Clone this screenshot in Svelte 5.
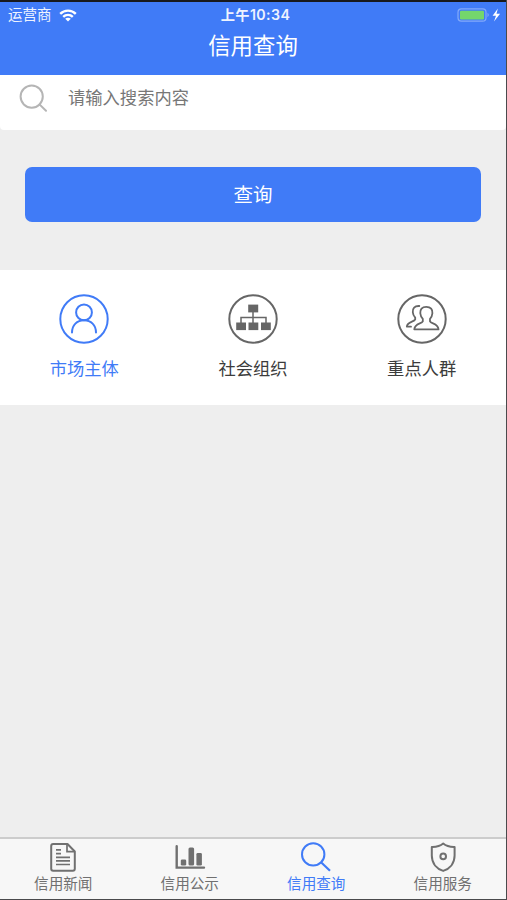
<script lang="ts">
	const categories = [
		{ id: 'market', label: '市场主体' },
		{ id: 'society', label: '社会组织' },
		{ id: 'people', label: '重点人群' }
	];

	const tabs = [
		{ id: 'news', label: '信用新闻' },
		{ id: 'public', label: '信用公示' },
		{ id: 'query', label: '信用查询' },
		{ id: 'service', label: '信用服务' }
	];

	let keyword = $state('');
	let category = $state('market');
	let activeTab = $state('query');
</script>

<div class="screen">
	<header>
		<div class="status-bar">
			<div class="carrier">
				<span>运营商</span>
				<svg width="18" height="13" viewBox="0 0 18 13" fill="none" stroke="#fff" stroke-width="2.4">
					<path d="M1.2 4.8C5.5.5 12.5.5 16.8 4.8" />
					<path d="M4.2 7.8C6.9 5.2 11.1 5.2 13.8 7.8" />
					<path d="M9 12.6 6.2 9.8C7.7 8.4 10.3 8.4 11.8 9.8Z" fill="#fff" stroke="none" />
				</svg>
			</div>
			<span class="time">上午10:34</span>
			<svg class="battery" width="44" height="14" viewBox="0 0 44 14">
				<rect x="1" y=".8" width="28" height="12.4" rx="3.4" fill="none" stroke="#83a9fa" stroke-width="1.2" />
				<rect x="3" y="2.8" width="24" height="8.6" rx="1.2" fill="#74d66c" />
				<path d="M30.5 4.8Q33 7 30.5 9.2Z" fill="#83a9fa" />
				<path d="M40.9.4 35.6 7.8H39L37 13.6 43.1 5.8H39.5Z" fill="#fff" />
			</svg>
		</div>
		<h1>信用查询</h1>
	</header>

	<label class="search">
		<svg width="30" height="30" viewBox="0 0 30 30" fill="none" stroke="#b5b5b5" stroke-width="2">
			<circle cx="13.7" cy="13.6" r="11.1" />
			<path d="M21.5 21.4 28 27.7" stroke-linecap="round" />
		</svg>
		<input type="text" placeholder="请输入搜索内容" bind:value={keyword} />
	</label>

	<button class="submit">查询</button>

	<section class="categories">
		{#each categories as item}
			<button class="category" class:active={category === item.id} onclick={() => (category = item.id)}>
				<svg width="50" height="50" viewBox="0 0 50 50" fill="none" stroke="currentColor" stroke-width="2">
					<circle cx="25" cy="25" r="23.7" />
					{#if item.id === 'market'}
						<circle cx="25" cy="18.4" r="7.9" />
						<path d="M13 38.6C13 31 18 26.3 25 26.3S37 31 37 38.6" stroke-linecap="round" />
					{:else if item.id === 'society'}
						<path d="M25 17V29M13 29V23.4H38V29" stroke-width="1.5" />
						<g fill="currentColor" stroke="none">
							<rect x="20.2" y="10.6" width="10" height="7.8" />
							<rect x="8.2" y="28.5" width="9.8" height="7.6" />
							<rect x="20.5" y="28.5" width="9.8" height="7.6" />
							<rect x="33" y="28.5" width="9.8" height="7.6" />
						</g>
					{:else}
						<g stroke-width="1.8" stroke-linecap="round" stroke-linejoin="round">
							<path d="M29.3 12.9C24.9 12.9 23 15.6 23.3 19.2C23.5 21.7 24.5 23.5 25.8 24.8V27.4C24.8 29.9 17.6 29.4 17.3 35.4H41.5C41.2 29.4 34 29.9 33 27.4V24.8C34.3 23.5 35.2 21.7 35.4 19.2C35.7 15.6 33.8 12.9 29.3 12.9Z" />
							<path d="M22.3 12C17.5 11.7 15.4 14.3 15.8 18.2C16 20.7 17 22.3 18.2 23.6V25.4C17.2 28.2 10.3 27.3 9.8 32.7H14" />
						</g>
					{/if}
				</svg>
				<span>{item.label}</span>
			</button>
		{/each}
	</section>

	<nav>
		{#each tabs as tab}
			<button class="tab" class:active={activeTab === tab.id} onclick={() => (activeTab = tab.id)}>
				<svg width="32" height="32" viewBox="0 0 32 32" fill="none" stroke="currentColor" stroke-width="2">
					{#if tab.id === 'news'}
						<path d="M20.5 3H6.2Q4.2 3 4.2 5V27.8Q4.2 29.8 6.2 29.8H25.8Q27.8 29.8 27.8 27.8V10.5Z" stroke-linejoin="round" />
						<path d="M20 3.5V10.7H27.5" stroke-width="1.7" />
						<path d="M9 8.8H14M9 12.6H14M9 16.3H23M9 19.9H23M9 23.5H23" stroke-width="1.7" />
					{:else if tab.id === 'public'}
						<path d="M2.7 5.2V26.6H30" stroke-width="2.4" stroke-linecap="round" />
						<g fill="currentColor" stroke="none">
							<rect x="6.8" y="18.5" width="5.4" height="6" rx="1.3" />
							<rect x="14.5" y="6.5" width="5.6" height="18" rx="1.5" />
							<rect x="22.4" y="12" width="5.5" height="12.5" rx="1.3" />
						</g>
					{:else if tab.id === 'query'}
						<circle cx="13.2" cy="13.4" r="11.2" />
						<path d="M21 21.2 30 29.8" stroke-width="2.2" />
					{:else}
						<path d="M16.2 2.6C13.5 5 9.2 6.1 4.8 6V14.5C4.8 22.2 9.6 27.7 16.2 29.9C22.8 27.7 27.6 22.2 27.6 14.5V6C23.2 6.1 18.9 5 16.2 2.6Z" stroke-linejoin="round" />
						<circle cx="16.2" cy="15.4" r="2.8" />
					{/if}
				</svg>
				<span>{tab.label}</span>
			</button>
		{/each}
	</nav>
</div>

<style>
	:global(body) {
		background: #eee;
	}

	.screen {
		box-sizing: border-box;
		height: 900px;
		display: flex;
		flex-direction: column;
		background: #eee;
		border: solid #4a4a4c;
		border-width: 0 1px 1px 0;
		font-family: 'Inter', 'Noto Sans CJK SC', sans-serif;
	}

	button {
		border: 0;
		padding: 0;
		background: none;
		font: inherit;
		cursor: pointer;
	}

	svg {
		flex: none;
	}

	header {
		box-sizing: border-box;
		height: 75px;
		background: #407bf7;
		border-top: 2px solid #18191d;
		color: #fff;
	}

	.status-bar {
		display: grid;
		grid-template-columns: 1fr auto 1fr;
		align-items: center;
		height: 26px;
		padding: 0 5px 0 8px;
		font-size: 14.5px;
		line-height: 26px;
		color: #eef3ff;
	}

	.carrier {
		display: flex;
		align-items: center;
		gap: 7px;
	}

	.time {
		padding-left: 2px;
		font-size: 14.2px;
		font-weight: 600;
		letter-spacing: 0.4px;
	}

	.battery {
		justify-self: end;
	}

	h1 {
		margin: 0;
		font-size: 22.4px;
		font-weight: 400;
		line-height: 36px;
		text-align: center;
	}

	.search {
		box-sizing: border-box;
		height: 55px;
		display: flex;
		align-items: flex-start;
		gap: 20px;
		padding: 8px 18px 0;
		background: #fff;
		border-radius: 0 0 4px 4px;
	}

	input {
		flex: 1;
		height: 28px;
		padding: 0;
		border: 0;
		outline: 0;
		background: none;
		font: inherit;
		font-size: 17.3px;
	}

	input::placeholder {
		color: #777;
		opacity: 1;
	}

	.submit {
		height: 55px;
		margin: 37px 25px 48px;
		padding-top: 2px;
		border-radius: 7px;
		background: #407bf7;
		color: #fff;
		font-size: 19.5px;
		line-height: 53px;
	}

	.categories {
		box-sizing: border-box;
		height: 135px;
		display: grid;
		grid-template-columns: repeat(3, 1fr);
		padding-top: 24px;
		background: #fff;
	}

	.category {
		display: flex;
		flex-direction: column;
		align-items: center;
		gap: 12px;
		color: #666;
		font-size: 17.3px;
		line-height: 26px;
	}

	.category span {
		color: #3c3c3c;
	}

	.category.active,
	.category.active span {
		color: #407bf7;
	}

	nav {
		box-sizing: border-box;
		height: 62px;
		margin-top: auto;
		display: grid;
		grid-template-columns: repeat(4, 1fr);
		background: #f7f7f7;
		border-top: 2px solid #ccc;
	}

	.tab {
		display: flex;
		flex-direction: column;
		align-items: center;
		padding-top: 2px;
		color: #707070;
		font-size: 14.6px;
		line-height: 22px;
	}

	.tab.active {
		color: #407bf7;
	}
</style>
